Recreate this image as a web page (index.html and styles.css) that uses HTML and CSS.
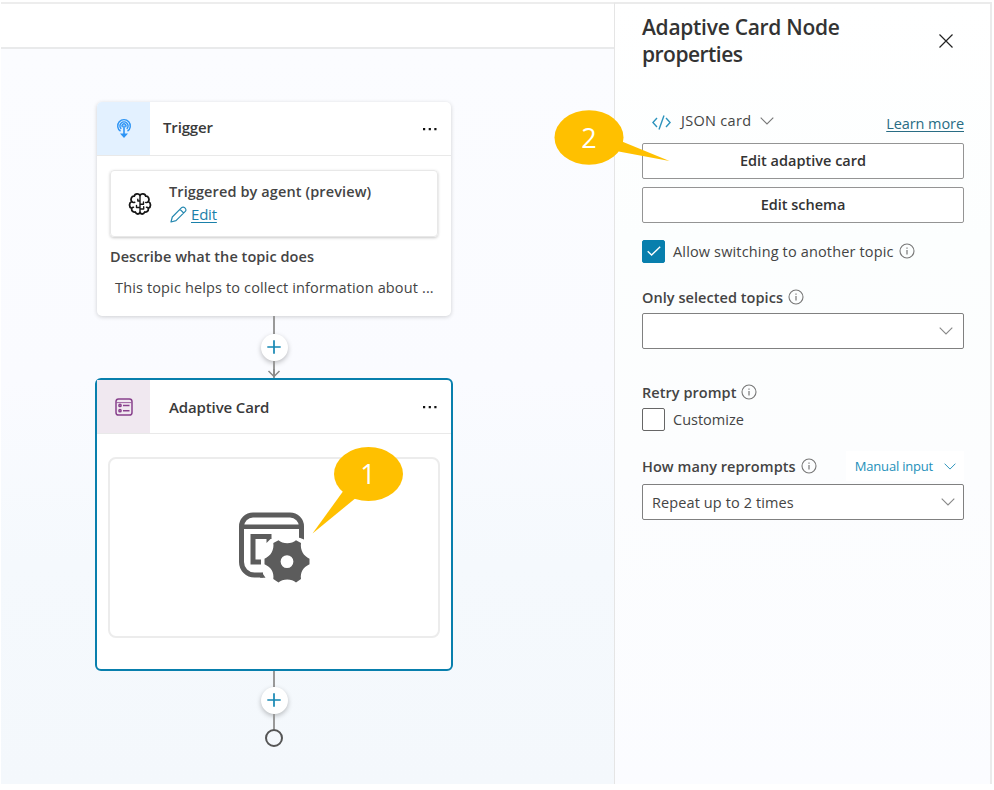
FILE: index.html
```html
<!DOCTYPE html>
<html lang="en">
<head>
<meta charset="utf-8">
<title>Adaptive Card Node properties</title>
<link rel="stylesheet" href="styles.css">
</head>
<body>
<svg width="0" height="0" class="defs">
  <symbol id="chev" viewBox="0 0 14 8"><path d="M.7.7 7 7 13.3.7" fill="none" stroke="currentColor" stroke-width="1.1"/></symbol>
  <symbol id="info" viewBox="0 0 16 16"><circle cx="8" cy="8" r="7" fill="none" stroke="currentColor" stroke-width="1.1"/><path d="M8 7v4.4M8 4.4v1.4" stroke="currentColor" stroke-width="1.2"/></symbol>
  <symbol id="dots" viewBox="0 0 16 4"><path d="M1 1h2.2v2.2H1zM6.700 1h2.200v2.200h-2.200zM12.300 1h2.200v2.200h-2.200z" fill="#111"/></symbol>
  <symbol id="plus" viewBox="0 0 14 14"><path d="M7 .3v13.400M.3 7h13.400" stroke="#1587b3" stroke-width="1.700"/></symbol>
</svg>
<div class="app">
  <main class="left">
    <div class="topbar"></div>
    <div class="canvas">
      <section class="card">
        <header class="head">
          <div class="tile blue">
            <svg width="16" height="22" viewBox="0 0 16 22" fill="none" stroke="#2c94f5" stroke-width="1.400"><path d="M4.500 13.200A6.300 6.300 0 1 1 11.500 13.200"/><path d="M5.200 11A4.100 4.100 0 1 1 10.800 11M6.500 9.200a2 2 0 1 1 3 0"/><path d="M8 7.500V18" stroke-width="1.600"/><path d="M4 15.500h8L8 20z" fill="#2c94f5" stroke="none"/></svg>
          </div>
          <h2 class="name t-trigger">Trigger</h2>
          <svg class="dots" width="16" height="4"><use href="#dots"/></svg>
        </header>
        <div class="source">
          <svg class="brain" width="24" height="24" viewBox="0 0 24 24" fill="none" stroke="#161616" stroke-width="1.800" stroke-linecap="round" stroke-linejoin="round"><path d="M12 3.500C11 1.200 7 1 6.200 4.200 3.500 4 2 7.500 3.700 9.500.8 11 .8 15 3.600 16.300 3.300 19.500 6 20.500 7.300 20c1.200 2.800 4.200 2.400 4.700.3 .5 2.100 3.500 2.500 4.700-.3 1.300.5 4-.5 3.700-3.700 2.800-1.300 2.800-5.300-.1-6.800C22 7.500 20.500 4 17.800 4.200 17 1 13 1.200 12 3.500z"/><path d="M12 3.500v17M3.700 9.500c.8 1 2.300 1 3.100.8M12 9H9.800V7.200M12 15.500H8.500v-2M12 12.300h3.500V10M12 17h3.700v-2.200M20.300 9.600c-.7 1-2 1-2.700.8M3.600 16.300c.5-.8 1.300-1 2-1M20.400 16.300c-.5-.8-1.300-1-2-1" stroke-width="1.400"/></svg>
          <div>
            <div class="src-name">Triggered by agent (preview)</div>
            <div class="edit"><svg width="17" height="17" viewBox="0 0 17 17" fill="none" stroke="#2588b0" stroke-width="1.200" stroke-linejoin="round"><path d="M1 16l1.300-5L11.600 1.700a2.100 2.100 0 0 1 3 0l.7.7a2.100 2.100 0 0 1 0 3L6 14.700zM10 3.300 13.700 7"/></svg><a>Edit</a></div>
          </div>
        </div>
        <div class="desc-label">Describe what the topic does</div>
        <div class="desc">This topic helps to collect information about ...</div>
      </section>
      <div class="link first">
        <i class="stem"></i><span class="add"><svg width="14" height="14"><use href="#plus"/></svg></span><i class="stem"></i>
        <svg class="arrow" width="14" height="9" viewBox="0 0 14 9" fill="none" stroke="#888" stroke-width="1.500"><path d="M7 0v8M1.500 2 7 7.500 12.500 2"/></svg>
      </div>
      <section class="card selected">
        <header class="head">
          <div class="tile plum">
            <svg width="18" height="18" viewBox="0 0 18 18" fill="none" stroke="#88408c" stroke-width="1.500"><rect x="1" y="1" width="16" height="16" rx="2.600"/><path d="M1.500 4.600h15" stroke-width=".8"/><path d="M8 7.400h6.500M8 12.700h6.500"/><circle cx="5" cy="7.400" r="1.100"/><circle cx="5" cy="12.700" r="1.100"/></svg>
          </div>
          <h2 class="name t-card">Adaptive Card</h2>
          <svg class="dots" width="16" height="4"><use href="#dots"/></svg>
        </header>
        <div class="preview">
          <svg width="72" height="71" viewBox="0 0 72 71">
            <g fill="none" stroke="#5c5c5c" stroke-width="5"><path d="M63.500 25.500V14.500A11.500 11.500 0 0 0 52 3H15A11.500 11.500 0 0 0 3.500 14.500V50A13 13 0 0 0 16.500 63H25"/><path d="M4 14.800h59" stroke-width="4.600"/><path d="M31 27V24.500H15V50H23" stroke-width="5"/></g>
            <path d="M24 60.500 27.500 65.700H22zM61 23h5v4.500l-5-2z" fill="#5c5c5c"/>
            <path d="M28.500 22H33v4.500L28.500 31z" fill="#5c5c5c"/>
            <path fill="#5c5c5c" fill-rule="evenodd" d="M40.500 28.200c4 4 13.500 4 17.500 0l5 2.800c-1 7 2.500 13 8.500 15.700v5.600c-6 2.700-9.500 8-8.500 14.700l-5 3.600c-4-4.300-13.500-4.300-17.500 0l-5.200-3.600c1-6.700-2.500-12-8.800-14.700v-5.600c6.300-2.700 9.800-8.700 8.800-15.700zM49 43.200a6.400 6.400 0 1 0 0 12.800 6.400 6.400 0 0 0 0-12.800z"/>
          </svg>
        </div>
      </section>
      <div class="link last">
        <i class="stem"></i><span class="add"><svg width="14" height="14"><use href="#plus"/></svg></span><i class="stem"></i>
        <b class="end"></b>
      </div>
    </div>
  </main>
  <aside class="panel">
    <div class="title-row">
      <h1><span class="h-a">Adaptive Card Node</span><br><span class="h-b">properties</span></h1>
      <svg class="close" width="14" height="14" viewBox="0 0 14 14"><path d="M.5.5l13 13m0-13-13 13" stroke="#222" stroke-width="1.200"/></svg>
    </div>
    <div class="mode-row">
      <svg class="code" width="19" height="15" viewBox="0 0 19 15" fill="none" stroke="#2d93bd" stroke-width="1.400"><path d="M5 3 .9 7.500 5 12M14 3l4.100 4.500L14 12M12 .5 7 14.500"/></svg>
      <span class="json">JSON card</span>
      <svg class="chev" width="14" height="8"><use href="#chev"/></svg>
      <a class="learn">Learn more</a>
    </div>
    <button class="btn b1"><span>Edit adaptive card</span></button>
    <button class="btn b2"><span>Edit schema</span></button>
    <div class="row allow"><span class="box on"><svg width="14" height="10" viewBox="0 0 14 10"><path d="M.7 5.200 4.600 9 13.200.8" fill="none" stroke="#fff" stroke-width="1.400"/></svg></span><span class="t-allow">Allow switching to another topic</span><svg class="info" width="16" height="16"><use href="#info"/></svg></div>
    <div class="row label only"><span class="t-only">Only selected topics</span><svg class="info" width="16" height="16"><use href="#info"/></svg></div>
    <div class="select s1"><span></span><svg width="14" height="8"><use href="#chev"/></svg></div>
    <div class="row label retry"><span class="t-retry">Retry prompt</span><svg class="info" width="16" height="16"><use href="#info"/></svg></div>
    <div class="row custom"><span class="box"></span><span class="t-custom">Customize</span></div>
    <div class="row label many"><span class="t-many">How many reprompts</span><svg class="info" width="16" height="16"><use href="#info"/></svg>
      <span class="manual"><span>Manual input</span><svg width="12" height="7"><use href="#chev"/></svg></span></div>
    <div class="select s2"><span>Repeat up to 2 times</span><svg width="14" height="8"><use href="#chev"/></svg></div>
  </aside>
  <div class="callout one"><svg width="92" height="90" viewBox="0 0 92 90"><ellipse cx="56.500" cy="28" rx="34.500" ry="27" fill="#ffc000"/><path d="M32 44 .5 87.500 45 51z" fill="#ffc000"/></svg><span>1</span></div>
  <div class="callout two"><svg width="118" height="56" viewBox="0 0 118 56"><ellipse cx="35" cy="27.500" rx="34.500" ry="27.200" fill="#ffc000"/><path d="M68 31.500 115.500 51 62 41z" fill="#ffc000"/></svg><span>2</span></div>
</div>
</body>
</html>
```
FILE: styles.css
```css
* { box-sizing: border-box; }
body { margin: 0; width: 994px; height: 790px; overflow: hidden; background: #fff; font-family: "Open Sans", "Noto Sans", sans-serif; font-size: 14px; color: #444; }
svg { display: block; flex: none; }
.defs { position: absolute; }
h1, h2 { margin: 0; }
span { white-space: nowrap; }
.app { position: relative; display: flex; width: 992px; height: 784px; padding: 2px 0 0 1px; }
.left { width: 613px; border-top: 2px solid #ededed; display: flex; flex-direction: column; }
.topbar { height: 45px; background: #fff; border-bottom: 2px solid #e9eaeb; }
.canvas { flex: 1; padding: 53px 0 0 96px; background: linear-gradient(180deg, #fbfcff 0%, #fafbff 45%, #f5f9fd 70%, #f4f8fc 100%); }

.card { width: 354px; height: 214px; border-radius: 5px; background: #fff; box-shadow: 0 1px 4px rgba(0,0,0,.18); }
.head { height: 54px; display: flex; align-items: center; border-bottom: 1px solid #e9e9e9; padding-right: 13px; }
.tile { width: 53px; height: 53px; display: flex; align-items: center; justify-content: center; }
.blue { background: #e3f1ff; border-radius: 5px 0 0 0; }
.plum { background: #f0e8f0; }
.name { font-size: 15px; line-height: 20px; font-weight: 600; color: #3a3a3a; flex: 1; }
.t-trigger { padding: 0 0 3px 13px; letter-spacing: -.15px; }
.t-card { padding-left: 19px; letter-spacing: -.13px; }
.source { margin: 14px 13px 0 13px; height: 67px; border: 1px solid #e8e8e8; border-radius: 4px; box-shadow: 0 1px 3px rgba(0,0,0,.22); display: flex; padding: 10px 0 0 17px; }
.brain { margin: 11px 17px 0 0; }
.src-name { font-weight: 600; line-height: 22px; font-size: 14.500px; letter-spacing: .11px; }
.edit { display: flex; align-items: center; gap: 4px; padding-left: 1px; height: 22px; font-size: 15px; color: #1a80aa; letter-spacing: -.2px; }
.edit a, .learn { text-decoration: underline; text-underline-offset: 2px; }
.desc-label { margin: 9px 0 0 13px; line-height: 22px; font-weight: 600; font-size: 14.500px; letter-spacing: .05px; }
.desc { margin: 9px 0 0 18px; line-height: 22px; font-size: 14.500px; letter-spacing: .14px; }

.link { width: 354px; display: flex; flex-direction: column; align-items: center; position: relative; }
.first { height: 62px; }
.first .stem { flex: 1; }
.last { height: 76px; }
.stem { width: 2px; flex: 1; background: #999; }
.add { width: 27px; height: 27px; border-radius: 50%; background: #fff; box-shadow: 0 2px 5px rgba(0,0,0,.25); display: flex; align-items: center; justify-content: center; }
.arrow { position: absolute; bottom: 0; }
.end { width: 18px; height: 18px; border: 2px solid #555; border-radius: 50%; }
.card.selected { width: 358px; height: 293px; margin-left: -2px; border: 2px solid #087fad; box-shadow: none; border-radius: 6px; }
.preview { margin: 23px 11px 0; height: 181px; border: 2px solid #ececec; border-radius: 8px; display: flex; justify-content: center; padding: 53px 1px 0 0; }

.panel { width: 378px; border: 2px solid #ebebeb; border-left: 1px solid #e5e5e5; border-bottom: 0; padding: 9px 26px 0 27px; background: linear-gradient(180deg, #fff, #fcfefe 30%, #fcfdfe 60%, #fbfcff); }
.title-row { display: flex; justify-content: space-between; height: 56px; }
h1 { font-size: 21px; line-height: 27px; font-weight: 600; color: #333; padding-top: 1px; }
.h-a { letter-spacing: -.28px; }
.h-b { letter-spacing: -.52px; }
.close { margin: 21px 11px 0 0; }
.mode-row { display: flex; align-items: center; height: 74px; padding: 30px 0 0 10px; line-height: 22px; font-size: 14.500px; }
.code { margin-right: 10px; margin-top: 2px; }
.json { letter-spacing: .3px; }
.chev { margin-left: 9px; color: #777; }
.learn { margin-left: auto; padding-top: 5px; color: #286c84; letter-spacing: -.08px; }
.btn { display: block; width: 322px; height: 36px; padding: 0; background: #fff; border: 1px solid #949494; border-radius: 2px; font: 600 14.500px/20px "Open Sans", sans-serif; color: #333; letter-spacing: 0; }
.b2 { margin-top: 8px; }
.row { display: flex; align-items: center; height: 22px; font-size: 14.500px; }
.box { width: 23px; height: 23px; border: 1.500px solid #666; border-radius: 2px; margin-right: 8px; display: flex; align-items: center; justify-content: center; flex: none; background: #fff; }
.on { background: #087fad; border-color: #087fad; }
.label { font-weight: 600; }
.info { margin-left: 5px; color: #777; }
.allow { margin-top: 17px; }
.t-allow { letter-spacing: .15px; }
.only { margin-top: 24px; }
.select { width: 322px; height: 36px; border: 1px solid #808080; border-radius: 2px; background: #fff; display: flex; align-items: center; justify-content: space-between; padding: 0 10px; font-size: 14.500px; letter-spacing: .11px; }
.select svg { color: #888; }
.s1 { margin-top: 5px; }
.retry { margin-top: 32px; }
.custom { margin-top: 5px; }
.many { margin-top: 25px; }
.t-only, .t-retry, .t-many { letter-spacing: .05px; }
.manual { margin-left: auto; display: flex; align-items: center; gap: 11px; color: #2490ba; font-weight: 400; font-size: 13px; background: #fff; height: 30px; padding: 0 8px 0 9px; letter-spacing: -.2px; }
.s2 { margin-top: 7px; padding: 0 8px 0 9px; }
.callout { position: absolute; color: #fff; font: 27px/30px "Open Sans", sans-serif; }
.callout span { position: absolute; text-align: center; width: 30px; }
.one { left: 312px; top: 446px; }
.one span { left: 41px; top: 13px; }
.two { left: 554px; top: 110px; }
.two span { left: 20px; top: 13px; }
```
